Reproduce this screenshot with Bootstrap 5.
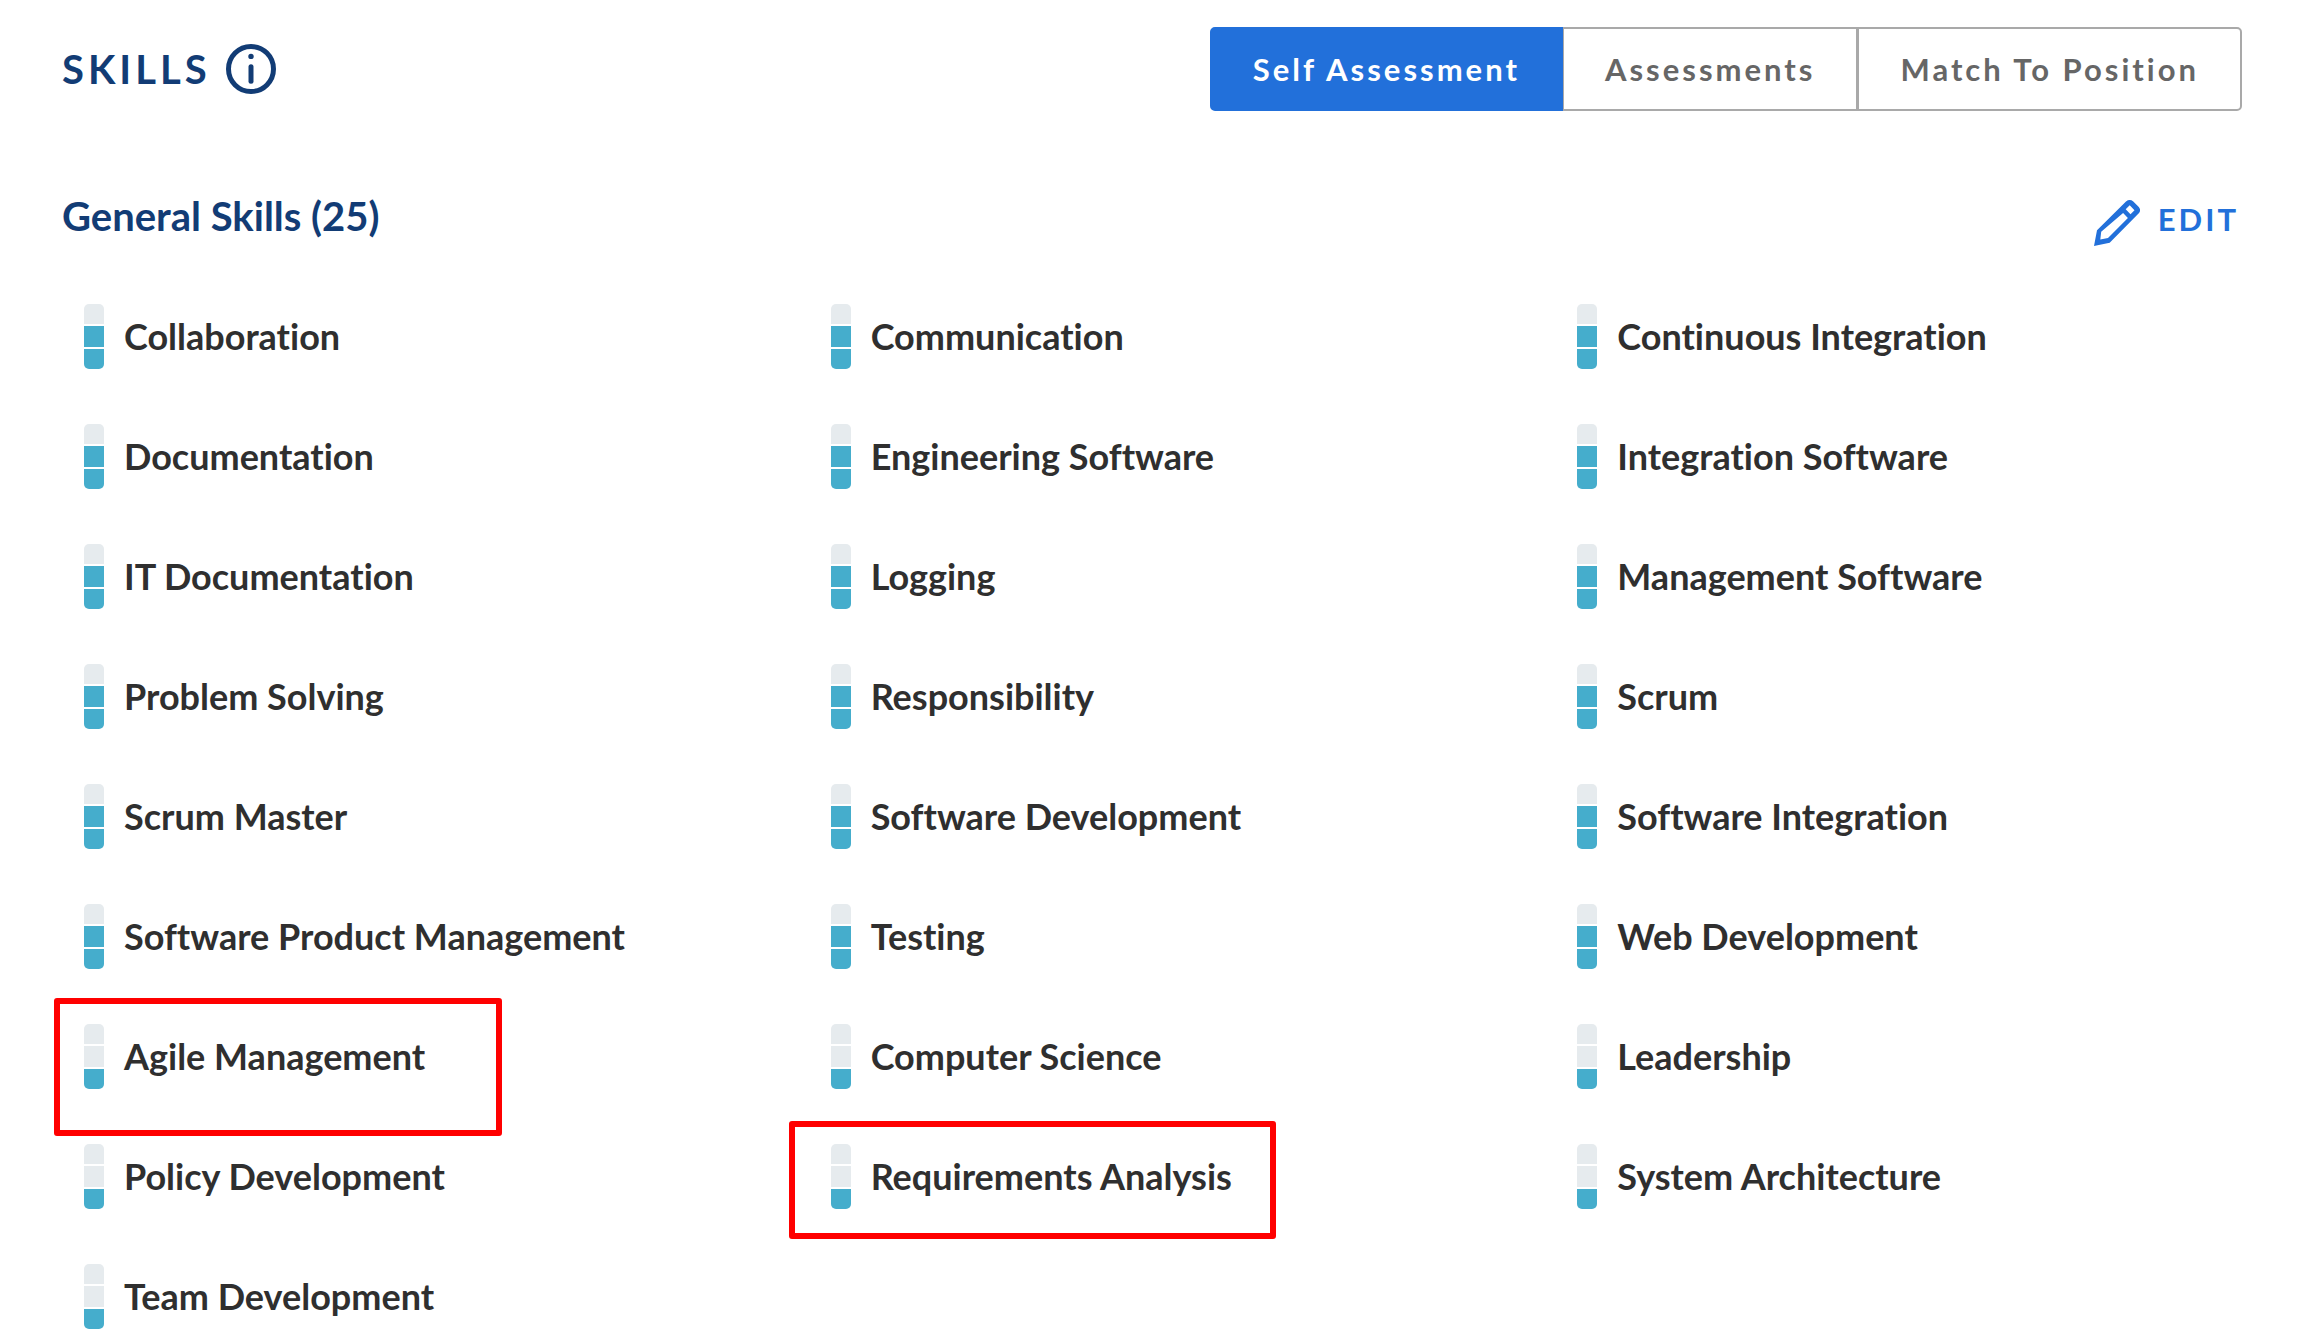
<!DOCTYPE html>
<html lang="en">
<head>
<meta charset="utf-8">
<meta name="viewport" content="width=device-width, initial-scale=1">
<title>Skills</title>
<link href="https://cdn.jsdelivr.net/npm/bootstrap@5.3.0/dist/css/bootstrap.min.css" rel="stylesheet">
<style>
  body { font-family: Lato, "Liberation Sans", sans-serif; font-variant-ligatures: none; color: #2f2f2f; background: #fff; }
  .skills-page { padding: 27px 61px 0 62px; }
  .page-title, .section-title { font-size: 40px; line-height: 48px; font-weight: 700; color: #123c75; }
  .page-title { letter-spacing: 4px; }
  .title-group { gap: 15px; }
  .info-btn { color: #123c75; line-height: 0; }
  .view-tabs .btn {
    --bs-btn-color: #666; --bs-btn-border-color: #a9a9a9; --bs-btn-border-width: 2px;
    --bs-btn-border-radius: 5px; --bs-btn-font-size: 31px; --bs-btn-line-height: 40px;
    --bs-btn-font-weight: 700; --bs-btn-padding-x: 41px; --bs-btn-padding-y: 20px;
    --bs-btn-active-bg: #2270da; --bs-btn-active-border-color: #2270da; --bs-btn-active-color: #fff;
    letter-spacing: 3px;
  }
  .view-tabs > .btn:not(:first-child) { margin-left: -2px; }
  .section-head { margin-top: 81px; margin-bottom: 58px; }
  .edit-btn { color: #2270da; font-size: 31px; line-height: 38px; font-weight: 700; letter-spacing: 3px; gap: 18px; margin: 8px 3px 0 0; }
  .skill-grid { --bs-gutter-x: 60px; --bs-gutter-y: 55px; }
  .skill { gap: 20px; padding-left: 22px; font-size: 36px; line-height: 64px; font-weight: 700; }
  .level { display: flex; flex-direction: column; gap: 2px; width: 20px; height: 65px; flex: none; border-radius: 5px; overflow: hidden; }
  .level i { flex: 1; background: #e6ebee; }
  .level-2 i:nth-child(2), .level i:last-child { background: #45adcc; }
  .callout-box { position: absolute; border: 6px solid #f00; border-radius: 3px; pointer-events: none; }
  .callout-agile { left: -8px; top: -26px; width: 448px; height: 138px; }
  .callout-requirements { left: -20px; top: -23px; width: 487px; height: 118px; }
</style>
</head>
<body>
<main class="skills-page">
  <header class="d-flex flex-wrap justify-content-between align-items-center">
    <div class="title-group d-flex align-items-center">
      <h1 class="page-title mb-0">SKILLS</h1>
      <button type="button" class="info-btn btn p-0 border-0" aria-label="About skills">
        <svg width="50" height="50" viewBox="0 0 50 50" fill="none" stroke="currentColor" stroke-width="5" aria-hidden="true"><circle cx="25" cy="25" r="22.5"/><path d="M25 22.7v14.6" stroke-linecap="round"/><circle cx="25" cy="12.4" r="2.7" fill="currentColor" stroke="none"/></svg>
      </button>
    </div>
    <div class="btn-group view-tabs" role="group" aria-label="Skills view">
      <button type="button" class="btn active" aria-pressed="true">Self Assessment</button>
      <button type="button" class="btn" aria-pressed="false">Assessments</button>
      <button type="button" class="btn" aria-pressed="false">Match To Position</button>
    </div>
  </header>

  <section aria-labelledby="general">
    <div class="section-head d-flex justify-content-between align-items-start">
      <h2 class="section-title mb-0" id="general">General Skills (25)</h2>
      <button type="button" class="edit-btn btn p-0 border-0 d-flex align-items-start">
        <svg width="46" height="46" viewBox="0 0 46 46" fill="currentColor" fill-rule="evenodd" aria-hidden="true"><path d="M0 46 3 30.3 32 1.4Q35.7-1.4 39.3 1.4L44.8 7Q47.4 10.2 44.8 13.3L15.7 42.8ZM7.2 31.8 6.3 39.6 14 38 33.9 18 29.1 13ZM31.7 9.3 36.5 14.2 40.5 10.2 35.7 5.3Z"/></svg>
        <span>EDIT</span>
      </button>
    </div>

    <ul class="skill-grid row row-cols-1 row-cols-lg-2 row-cols-xl-3 list-unstyled mb-0">
      <li><div class="skill d-flex align-items-start"><span class="level level-2"><i></i><i></i><i></i></span>Collaboration</div></li>
      <li><div class="skill d-flex align-items-start"><span class="level level-2"><i></i><i></i><i></i></span>Communication</div></li>
      <li><div class="skill d-flex align-items-start"><span class="level level-2"><i></i><i></i><i></i></span>Continuous Integration</div></li>
      <li><div class="skill d-flex align-items-start"><span class="level level-2"><i></i><i></i><i></i></span>Documentation</div></li>
      <li><div class="skill d-flex align-items-start"><span class="level level-2"><i></i><i></i><i></i></span>Engineering Software</div></li>
      <li><div class="skill d-flex align-items-start"><span class="level level-2"><i></i><i></i><i></i></span>Integration Software</div></li>
      <li><div class="skill d-flex align-items-start"><span class="level level-2"><i></i><i></i><i></i></span>IT Documentation</div></li>
      <li><div class="skill d-flex align-items-start"><span class="level level-2"><i></i><i></i><i></i></span>Logging</div></li>
      <li><div class="skill d-flex align-items-start"><span class="level level-2"><i></i><i></i><i></i></span>Management Software</div></li>
      <li><div class="skill d-flex align-items-start"><span class="level level-2"><i></i><i></i><i></i></span>Problem Solving</div></li>
      <li><div class="skill d-flex align-items-start"><span class="level level-2"><i></i><i></i><i></i></span>Responsibility</div></li>
      <li><div class="skill d-flex align-items-start"><span class="level level-2"><i></i><i></i><i></i></span>Scrum</div></li>
      <li><div class="skill d-flex align-items-start"><span class="level level-2"><i></i><i></i><i></i></span>Scrum Master</div></li>
      <li><div class="skill d-flex align-items-start"><span class="level level-2"><i></i><i></i><i></i></span>Software Development</div></li>
      <li><div class="skill d-flex align-items-start"><span class="level level-2"><i></i><i></i><i></i></span>Software Integration</div></li>
      <li><div class="skill d-flex align-items-start"><span class="level level-2"><i></i><i></i><i></i></span>Software Product Management</div></li>
      <li><div class="skill d-flex align-items-start"><span class="level level-2"><i></i><i></i><i></i></span>Testing</div></li>
      <li><div class="skill d-flex align-items-start"><span class="level level-2"><i></i><i></i><i></i></span>Web Development</div></li>
      <li><div class="skill d-flex align-items-start position-relative"><span class="level"><i></i><i></i><i></i></span>Agile Management<span class="callout-box callout-agile"></span></div></li>
      <li><div class="skill d-flex align-items-start"><span class="level"><i></i><i></i><i></i></span>Computer Science</div></li>
      <li><div class="skill d-flex align-items-start"><span class="level"><i></i><i></i><i></i></span>Leadership</div></li>
      <li><div class="skill d-flex align-items-start"><span class="level"><i></i><i></i><i></i></span>Policy Development</div></li>
      <li><div class="skill d-flex align-items-start position-relative"><span class="level"><i></i><i></i><i></i></span>Requirements Analysis<span class="callout-box callout-requirements"></span></div></li>
      <li><div class="skill d-flex align-items-start"><span class="level"><i></i><i></i><i></i></span>System Architecture</div></li>
      <li><div class="skill d-flex align-items-start"><span class="level"><i></i><i></i><i></i></span>Team Development</div></li>
    </ul>
  </section>
</main>
<script src="https://cdn.jsdelivr.net/npm/bootstrap@5.3.0/dist/js/bootstrap.bundle.min.js"></script>
</body>
</html>
